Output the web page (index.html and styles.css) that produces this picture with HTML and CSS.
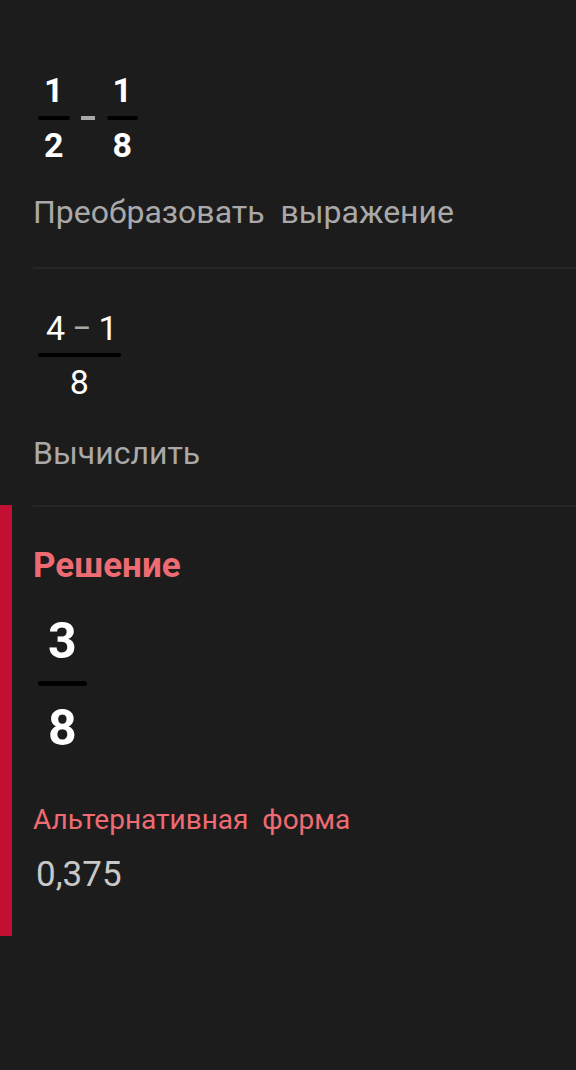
FILE: index.html
```html
<!DOCTYPE html>
<html lang="ru">
<head>
<meta charset="utf-8">
<title>Решение</title>
<link rel="stylesheet" href="styles.css">
</head>
<body>
<main class="page">
  <section class="step step-first">
    <div class="expr expr-bold">
      <div class="frac">
        <div class="num">1</div>
        <div class="bar"></div>
        <div class="den">2</div>
      </div>
      <div class="minus-bar"></div>
      <div class="frac">
        <div class="num">1</div>
        <div class="bar"></div>
        <div class="den">8</div>
      </div>
    </div>
    <p class="step-label">Преобразовать  выражение</p>
  </section>
  <hr class="sep">
  <section class="step">
    <div class="expr expr-regular">
      <div class="frac frac-wide">
        <div class="num">4<span class="op">−</span>1</div>
        <div class="bar bar-thin"></div>
        <div class="den">8</div>
      </div>
    </div>
    <p class="step-label step-label-second">Вычислить</p>
  </section>
  <hr class="sep">
  <section class="solution">
    <h2 class="solution-title">Решение</h2>
    <div class="expr expr-big">
      <div class="frac frac-big">
        <div class="num">3</div>
        <div class="bar bar-big"></div>
        <div class="den">8</div>
      </div>
    </div>
    <p class="alt-title">Альтернативная  форма</p>
    <p class="alt-value">0,375</p>
  </section>
</main>
</body>
</html>
```
FILE: styles.css
```css
html, body {
  margin: 0;
  padding: 0;
  background: #1c1c1c;
}
body {
  font-family: Roboto, "Noto Sans", "Liberation Sans", sans-serif;
  color: #ffffff;
  width: 576px;
  height: 1070px;
  overflow: hidden;
}
.page {
  display: flex;
  flex-direction: column;
}
.step {
  padding: 0 0 0 33px;
}
.step-first {
  padding-top: 73px;
}
.sep {
  margin: 0 0 0 33px;
  border: 0;
  height: 2px;
  background: #262626;
}
.expr {
  display: flex;
  align-items: flex-start;
  padding-left: 5px;
}
.frac {
  display: flex;
  flex-direction: column;
  align-items: center;
}
.num, .den {
  line-height: 34px;
  font-size: 34px;
  padding: 0 6px;
}
.expr-bold .num, .expr-bold .den {
  font-weight: 700;
}
.bar {
  align-self: stretch;
  height: 4px;
  background: #000;
  border-radius: 2px;
  margin: 9px 0 8px;
}
.minus-bar {
  width: 14px;
  height: 4px;
  background: #a8a8a8;
  margin: 43px 12px 0 11px;
}
.step-label {
  margin: 31px 0 36px;
  font-size: 32px;
  line-height: 38px;
  color: #a9a9a9;
  white-space: pre;
}
.step-label-second {
  margin-top: 35px;
  margin-bottom: 33px;
}
.expr-regular {
  padding-top: 42px;
}
.expr-regular .num, .expr-regular .den {
  font-weight: 400;
}
.frac-wide .num {
  padding: 0 3px 0 8px;
}
.op {
  color: #a8a8a8;
  margin: 0 7px;
}
.bar-thin {
  height: 4px;
  margin: 8px 0 8px;
}
.solution {
  border-left: 12px solid #c20f33;
  padding: 40px 0 41px 21px;
  margin-top: -2px;
}
.solution-title {
  margin: 0;
  font-size: 35px;
  line-height: 42px;
  font-weight: 700;
  color: #ef6b73;
}
.expr-big {
  padding-top: 29px;
}
.frac-big .num, .frac-big .den {
  font-size: 50px;
  line-height: 50px;
  font-weight: 700;
  padding: 0 10px;
}
.bar-big {
  height: 5px;
  border-radius: 3px;
  margin: 15px 0 17px;
}
.alt-title {
  margin: 50px 0 0;
  font-size: 28px;
  line-height: 34px;
  color: #ef6b73;
  white-space: pre;
}
.alt-value {
  margin: 18px 0 0;
  padding-left: 3px;
  font-size: 35px;
  line-height: 40px;
  color: #c8c8c8;
}
```
